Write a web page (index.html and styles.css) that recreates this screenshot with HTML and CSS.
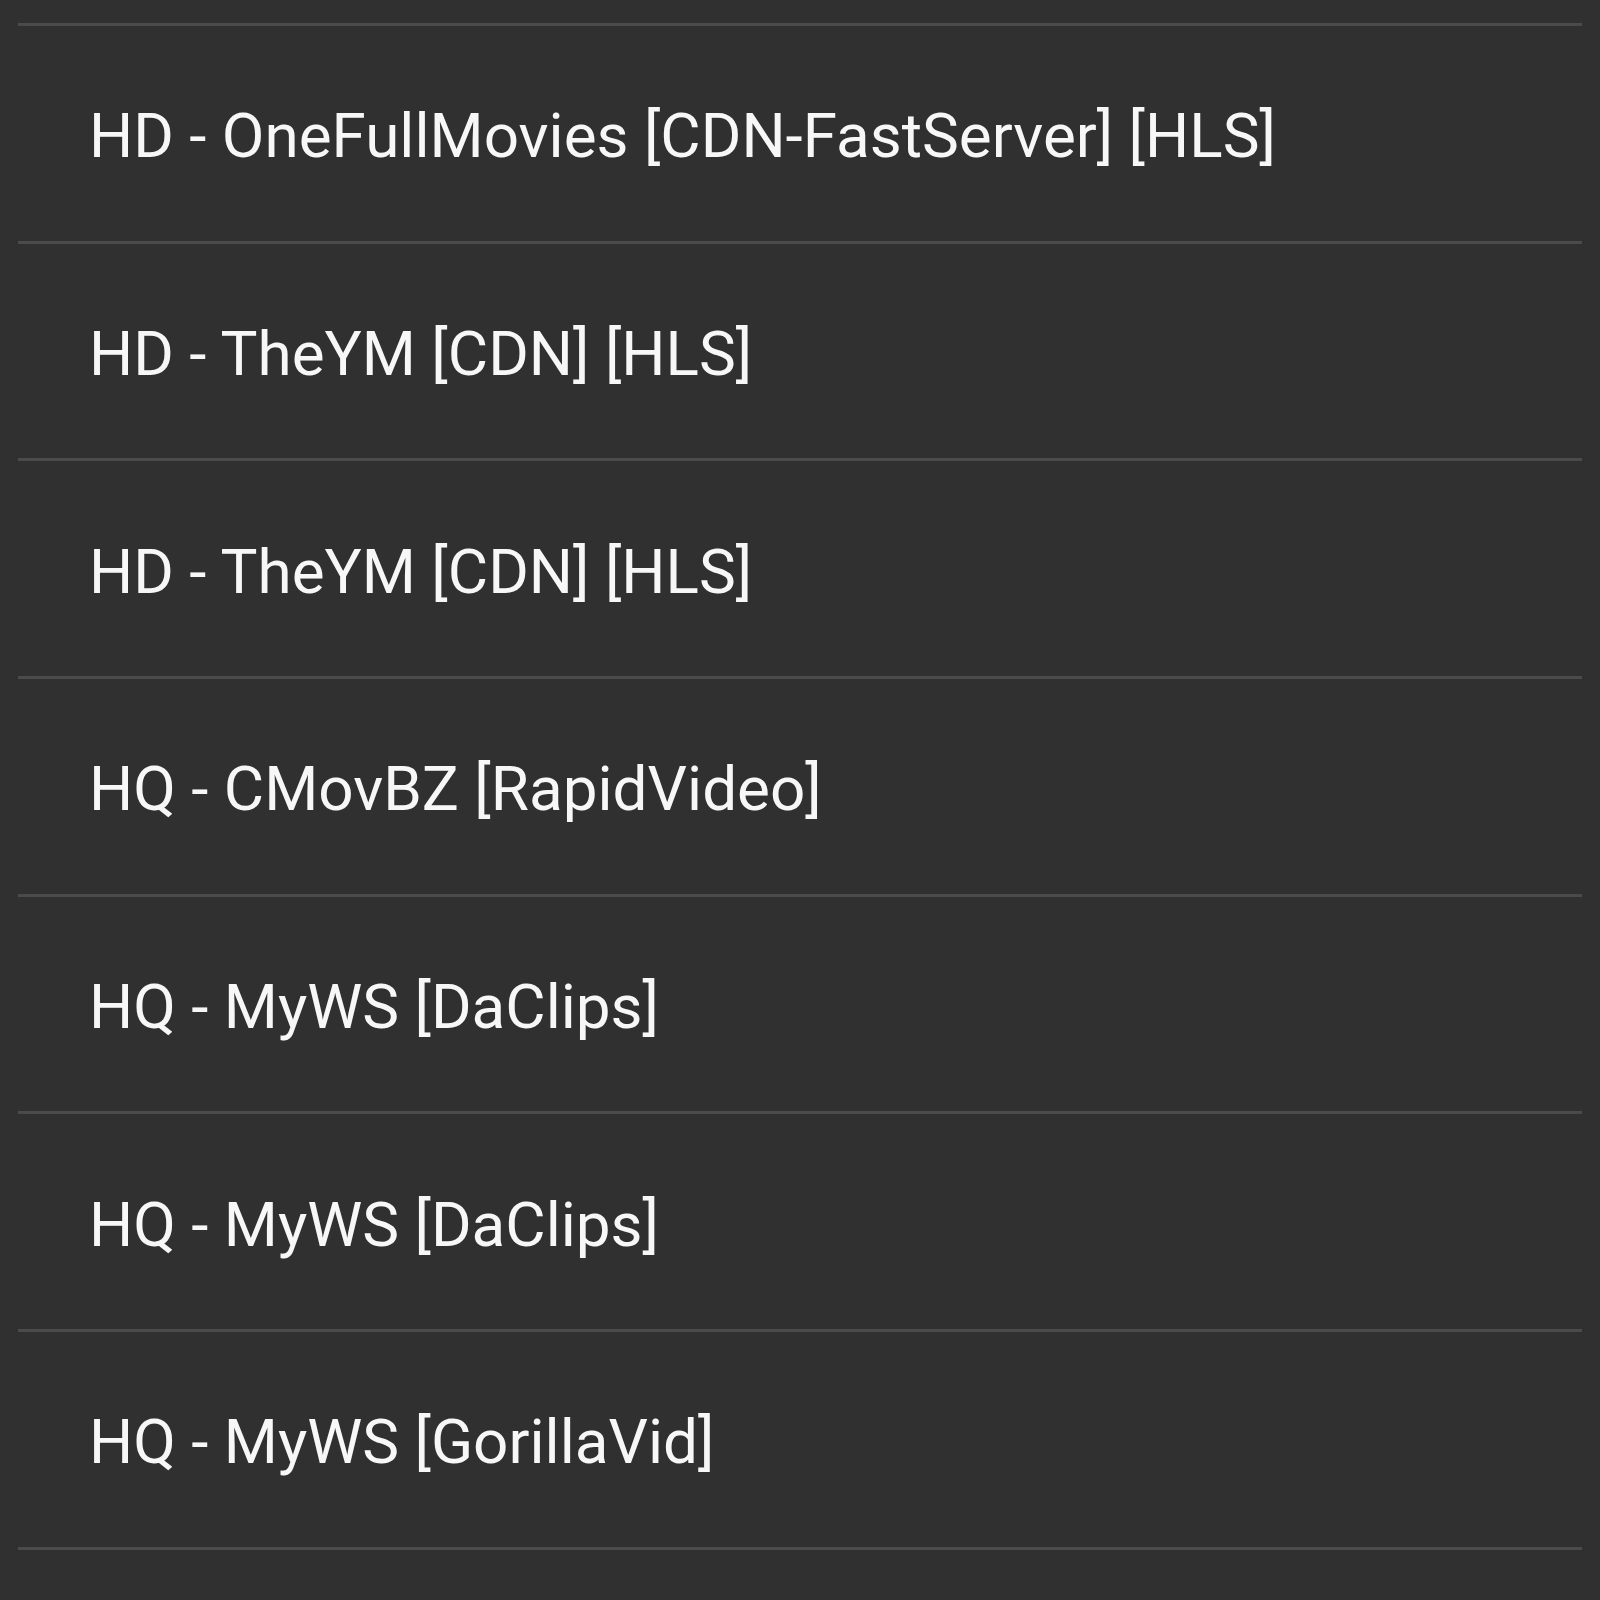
FILE: index.html
```html
<!DOCTYPE html>
<html>
<head>
<meta charset="utf-8">
<link rel="stylesheet" href="styles.css">
</head>
<body>
<ul class="sources">
  <li class="source">HD - OneFullMovies [CDN-FastServer] [HLS]</li>
  <li class="source">HD - TheYM [CDN] [HLS]</li>
  <li class="source">HD - TheYM [CDN] [HLS]</li>
  <li class="source">HQ - CMovBZ [RapidVideo]</li>
  <li class="source">HQ - MyWS [DaClips]</li>
  <li class="source">HQ - MyWS [DaClips]</li>
  <li class="source">HQ - MyWS [GorillaVid]</li>
</ul>
</body>
</html>
```

FILE: styles.css
```css
html, body {
  margin: 0;
  padding: 0;
  background: #303030;
  height: 100%;
}
.sources {
  list-style: none;
  margin: 0;
  padding: 23px 18px 0 18px;
  font-family: Roboto, "Noto Sans", sans-serif;
}
.source {
  box-sizing: border-box;
  height: 217.7px;
  border-top: 3px solid #4b4b4b;
  display: flex;
  align-items: center;
  padding-left: 71px;
  padding-top: 5px;
  font-size: 62px;
  color: #f7f7f7;
  white-space: nowrap;
}
.source:last-child {
  border-bottom: 3px solid #4b4b4b;
  height: 220.7px;
}
```
